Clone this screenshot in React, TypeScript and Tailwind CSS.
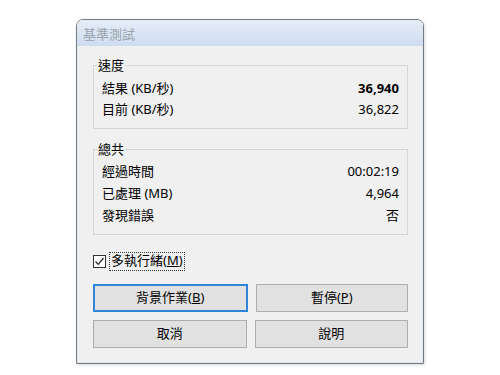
import React from 'react';

const font = { fontFamily: '"Segoe UI", "Noto Sans", "Noto Sans CJK TC", sans-serif' };

const Row = ({ label, value, bold = false, h }: { label: string; value: string; bold?: boolean; h: string }) => (
  <div className={`flex items-center justify-between px-[8px] ${h}`}>
    <span>{label}</span>
    <span className={bold ? 'font-bold' : ''}>{value}</span>
  </div>
);

const Group = ({ title, children, className }: { title: string; children: React.ReactNode; className: string }) => (
  <fieldset className={`border border-[#d5d5d5] mx-0 ${className}`}>
    <legend className="ml-[3px] px-[1px] leading-[16px]">{title}</legend>
    {children}
  </fieldset>
);

const Btn = ({ children, primary = false }: { children: React.ReactNode; primary?: boolean }) => (
  <button
    className={`h-[28px] flex-1 flex items-center justify-center bg-[#e1e1e1] text-[13px] ${
      primary ? 'border-2 border-[#2f86d8]' : 'border border-[#adadad]'
    }`}
  >
    {children}
  </button>
);

export default function App() {
  return (
    <div className="w-[500px] h-[375px] bg-white pt-[19px] pl-[76px] text-[13px] text-black" style={font}>
      <div className="w-[348px] h-[345px] border border-[#767a80] rounded-t-[7px] flex flex-col overflow-hidden shadow-[1px_1px_3px_rgba(0,0,0,0.15)]">
        <div className="h-[26px] flex items-center px-[6px] bg-gradient-to-b from-[#e6eef8] to-[#cddcee] text-[#9aa3ad] leading-none pt-[2px]">
          基準測試
        </div>
        <div className="flex-1 bg-[#f0f0f0] pl-[15px] pr-[14px] pt-[11px] border-x border-b border-[#dfe8f3]">
          <Group title="速度" className="pt-[5px] pb-[8px]">
            <Row label="結果 (KB/秒)" value="36,940" bold h="h-[21px]" />
            <Row label="目前 (KB/秒)" value="36,822" h="h-[21px]" />
          </Group>
          <Group title="總共" className="mt-[12px] pt-[4px] pb-[7px]">
            <Row label="經過時間" value="00:02:19" h="h-[22px]" />
            <Row label="已處理 (MB)" value="4,964" h="h-[22px]" />
            <Row label="發現錯誤" value="否" h="h-[22px]" />
          </Group>
          <div className="mt-[16px] flex items-center h-[20px]">
            <div className="w-[13px] h-[13px] border border-[#333] bg-white flex items-center justify-center">
              <svg width="11" height="11" viewBox="0 0 11 11">
                <path d="M1.5 5.5 L4.2 8.3 L9.5 2" fill="none" stroke="#222" strokeWidth="1.2" />
              </svg>
            </div>
            <span className="ml-[3px] px-[1px] h-[19px] flex items-center border border-dotted border-[#333]">
              多執行緒(<span className="underline">M</span>)
            </span>
          </div>
          <div className="mt-[13px] flex gap-[8px]">
            <Btn primary>
              背景作業(<span className="underline">B</span>)
            </Btn>
            <Btn>
              暫停(<span className="underline">P</span>)
            </Btn>
          </div>
          <div className="mt-[8px] flex gap-[8px]">
            <Btn>取消</Btn>
            <Btn>說明</Btn>
          </div>
        </div>
      </div>
    </div>
  );
}
